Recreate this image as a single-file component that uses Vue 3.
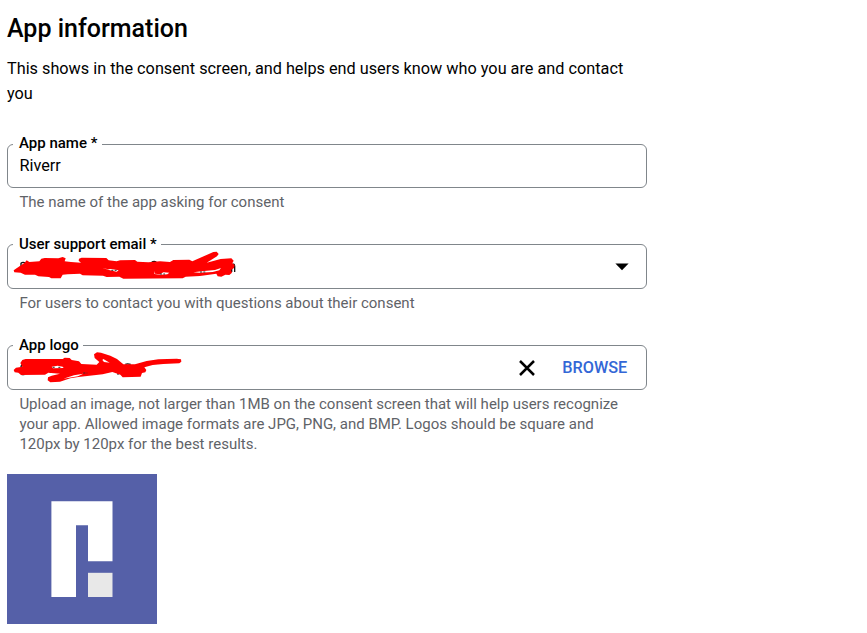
<script setup>
import { ref } from 'vue'

const appName = ref('Riverr')
</script>

<template>
  <main class="page">
    <h1 class="title">App information</h1>
    <p class="intro">This shows in the consent screen, and helps end users know who you are and contact you</p>

    <section class="field field-name">
      <div class="box">
        <span class="label">App name *</span>
        <span class="value">{{ appName }}</span>
      </div>
      <p class="hint">The name of the app asking for consent</p>
    </section>

    <section class="field field-email">
      <div class="box">
        <span class="label">User support email *</span>
        <svg class="scribble" width="250" height="60" viewBox="0 0 750 180">
          <g class="ink">
            <path d="M63 80V70Q68 65 76 69M378 64v4M455 66q8-3 14 0M695 96V75q8-6 9 3v18" />
          </g>
          <path class="red" d="M41 91L74 68 80 61 88 66 118 64 124 56 134 54 175 55 188 51 197 55 194 64 213 66 243 68 236 62 237 56 245 53 319 54 326 61 350 64 360 61 405 60 412 65 445 67 480 64 510 66 520 60 568 59 577 64 640 36 650 35 656 42 651 49 620 68 662 57 694 55 701 62 697 70 704 75 702 84 693 90 696 98 688 105 676 104 664 110 653 109 649 101 600 108 557 110 548 115 370 116 358 110 320 111 309 107 248 106 240 101 203 103 188 104 182 115 154 115 147 111 115 109 105 104 75 104 62 98 43 97Z" />
          <path class="gap" d="M306 83l18 5 9-1 23 4-6 4-20-4zM463 93l2 8 15 2 10-6 18 1-6 5-20 1-19-2zM580 97l25-3 40-4 18-6-5 7-20 5-40 2z" />
          <path class="speck" d="M334 91h18M480 102h15M600 96h18" />
        </svg>
        <svg class="arrow" width="14" height="8" viewBox="0 0 14 8"><path d="M.4.5H13.6L7 7.2Z" /></svg>
      </div>
      <p class="hint">For users to contact you with questions about their consent</p>
    </section>

    <section class="field field-logo">
      <div class="box">
        <span class="label">App logo</span>
        <svg class="scribble scribble-logo" width="250" height="60" viewBox="0 0 750 180">
          <g class="ink">
            <path d="M63 82q0-7 6-8M65 104h8M141 83v15M151 98v-4M168 98V90M181 90v8M354 104v-8M376 73q6-3 16 0" />
          </g>
          <path class="red" d="M41 90L48 83 67 80 61 69 67 60 77 57 188 57 194 53 209 54 215 60 237 64 244 72 290 74 298 66 284 54 282 43 291 37 303 38 331 47 351 57 370 73 405 73 440 63 475 58 530 56 543 58 544 65 538 70 490 72 458 75 433 82 439 90 436 97 426 99 422 110 368 112 361 104 337 96 308 103 235 111 211 115 180 125 151 127 143 121 144 112 155 107 180 101 145 98 135 104 63 105 55 98 44 97Z" />
          <path class="gap" d="M310 57l19 11-17-2-5-6zM155 80l18-3 15 3 3 4-32 1zM190 116l32-10 28-5-16 8z" />
          <path class="speck" d="M158 82h8M175 82h10M250 99h12" />
        </svg>
        <svg class="close" width="16" height="16" viewBox="0 0 16 16"><path d="M1 1L15 15M15 1L1 15" /></svg>
        <span class="browse">BROWSE</span>
      </div>
      <p class="hint">Upload an image, not larger than 1MB on the consent screen that will help users recognize your app. Allowed image formats are JPG, PNG, and BMP. Logos should be square and 120px by 120px for the best results.</p>
    </section>

    <svg class="logo" width="150" height="150" viewBox="0 0 150 150">
      <rect width="150" height="150" fill="#5560a8" />
      <path d="M44.4 27.2H105.5V87.2H81V51.3H69V123H44.4Z" fill="#fff" />
      <path d="M81 98.8H105.5V123H81Z" fill="#e8e8e8" />
    </svg>
  </main>
</template>

<style>
body {
  background: #fff;
}
</style>

<style scoped>
.page {
  box-sizing: border-box;
  width: 654px;
  height: 633px;
  padding: 14px 7px 0;
  overflow: hidden;
  font-family: Roboto, sans-serif;
  color: #000;
}
.title {
  margin: 0;
  font-size: 25px;
  line-height: 30px;
  font-weight: 500;
}
.intro {
  height: 50px;
  margin: 12px 0 0;
  font-size: 16.25px;
  line-height: 25px;
}
.field {
  height: 101px;
}
.field-name {
  margin-top: 38px;
  height: 100px;
}
.field-logo {
  height: 129px;
}
.box {
  position: relative;
  box-sizing: border-box;
  display: flex;
  align-items: center;
  justify-content: flex-end;
  width: 640px;
  height: 45px;
  padding: 0 18.7px 0 11.5px;
  border: 1px solid #80868b;
  border-radius: 6px;
}
.field-name .box {
  height: 44px;
  justify-content: flex-start;
}
.label {
  position: absolute;
  z-index: 1;
  left: 5px;
  top: -11px;
  padding: 0 4px 0 6px;
  background: #fff;
  font-size: 15px;
  line-height: 20px;
  font-weight: 500;
  white-space: nowrap;
}
.field-name .label {
  top: -12px;
  padding-right: 5px;
}
.value {
  font-size: 16.25px;
  line-height: 20px;
}
.hint {
  margin: 4px 12px 0 12.4px;
  font-size: 15px;
  line-height: 20px;
  color: #5f6368;
}
.scribble {
  position: absolute;
  left: -8px;
  top: -5px;
}
.scribble-logo {
  top: -6px;
}
.ink path {
  fill: none;
  stroke: #111;
  stroke-width: 4;
}
.red {
  fill: #f00;
}
.gap {
  fill: #fff;
}
.speck {
  fill: none;
  stroke: #333;
  stroke-width: 3;
  stroke-dasharray: 6 4;
}
.arrow {
  margin-right: -2px;
}
.close {
  margin-right: 27px;
  fill: none;
  stroke: #000;
  stroke-width: 2.5;
}
.browse {
  font-size: 16.25px;
  line-height: 20px;
  font-weight: 500;
  color: #3367d6;
}
.logo {
  display: block;
}
</style>
